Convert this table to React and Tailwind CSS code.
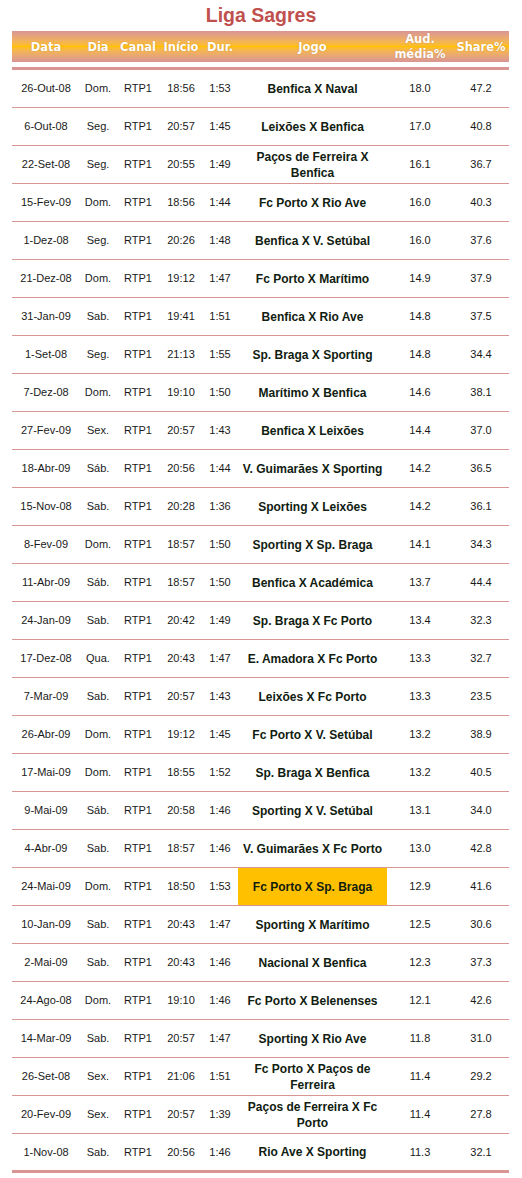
const jogos = [
  ["26-Out-08", "Dom.", "RTP1", "18:56", "1:53", "Benfica X Naval", "18.0", "47.2"],
  ["6-Out-08", "Seg.", "RTP1", "20:57", "1:45", "Leixões X Benfica", "17.0", "40.8"],
  ["22-Set-08", "Seg.", "RTP1", "20:55", "1:49", "Paços de Ferreira X Benfica", "16.1", "36.7"],
  ["15-Fev-09", "Dom.", "RTP1", "18:56", "1:44", "Fc Porto X Rio Ave", "16.0", "40.3"],
  ["1-Dez-08", "Seg.", "RTP1", "20:26", "1:48", "Benfica X V. Setúbal", "16.0", "37.6"],
  ["21-Dez-08", "Dom.", "RTP1", "19:12", "1:47", "Fc Porto X Marítimo", "14.9", "37.9"],
  ["31-Jan-09", "Sab.", "RTP1", "19:41", "1:51", "Benfica X Rio Ave", "14.8", "37.5"],
  ["1-Set-08", "Seg.", "RTP1", "21:13", "1:55", "Sp. Braga X Sporting", "14.8", "34.4"],
  ["7-Dez-08", "Dom.", "RTP1", "19:10", "1:50", "Marítimo X Benfica", "14.6", "38.1"],
  ["27-Fev-09", "Sex.", "RTP1", "20:57", "1:43", "Benfica X Leixões", "14.4", "37.0"],
  ["18-Abr-09", "Sáb.", "RTP1", "20:56", "1:44", "V. Guimarães X Sporting", "14.2", "36.5"],
  ["15-Nov-08", "Sab.", "RTP1", "20:28", "1:36", "Sporting X Leixões", "14.2", "36.1"],
  ["8-Fev-09", "Dom.", "RTP1", "18:57", "1:50", "Sporting X Sp. Braga", "14.1", "34.3"],
  ["11-Abr-09", "Sáb.", "RTP1", "18:57", "1:50", "Benfica X Académica", "13.7", "44.4"],
  ["24-Jan-09", "Sab.", "RTP1", "20:42", "1:49", "Sp. Braga X Fc Porto", "13.4", "32.3"],
  ["17-Dez-08", "Qua.", "RTP1", "20:43", "1:47", "E. Amadora X Fc Porto", "13.3", "32.7"],
  ["7-Mar-09", "Sab.", "RTP1", "20:57", "1:43", "Leixões X Fc Porto", "13.3", "23.5"],
  ["26-Abr-09", "Dom.", "RTP1", "19:12", "1:45", "Fc Porto X V. Setúbal", "13.2", "38.9"],
  ["17-Mai-09", "Dom.", "RTP1", "18:55", "1:52", "Sp. Braga X Benfica", "13.2", "40.5"],
  ["9-Mai-09", "Sáb.", "RTP1", "20:58", "1:46", "Sporting X V. Setúbal", "13.1", "34.0"],
  ["4-Abr-09", "Sab.", "RTP1", "18:57", "1:46", "V. Guimarães X Fc Porto", "13.0", "42.8"],
  ["24-Mai-09", "Dom.", "RTP1", "18:50", "1:53", "Fc Porto X Sp. Braga", "12.9", "41.6", true],
  ["10-Jan-09", "Sab.", "RTP1", "20:43", "1:47", "Sporting X Marítimo", "12.5", "30.6"],
  ["2-Mai-09", "Sab.", "RTP1", "20:43", "1:46", "Nacional X Benfica", "12.3", "37.3"],
  ["24-Ago-08", "Dom.", "RTP1", "19:10", "1:46", "Fc Porto X Belenenses", "12.1", "42.6"],
  ["14-Mar-09", "Sab.", "RTP1", "20:57", "1:47", "Sporting X Rio Ave", "11.8", "31.0"],
  ["26-Set-08", "Sex.", "RTP1", "21:06", "1:51", "Fc Porto X Paços de Ferreira", "11.4", "29.2"],
  ["20-Fev-09", "Sex.", "RTP1", "20:57", "1:39", "Paços de Ferreira X Fc Porto", "11.4", "27.8"],
  ["1-Nov-08", "Sab.", "RTP1", "20:56", "1:46", "Rio Ave X Sporting", "11.3", "32.1"],
];

const cols = "grid grid-cols-[68px_36px_44px_42px_36px_149px_66px_56px]";

const App = () => {
  return (
    <div className="w-[522px] bg-white font-['Liberation_Sans',Arial,sans-serif]">
      <div className="h-[31px] flex items-center justify-center">
        <h1 className="text-[19.5px] font-bold text-[#c0504d] leading-none">Liga Sagres</h1>
      </div>

      <div className="ml-[12px] w-[497px]">
        <div
          className={`${cols} h-[31px] items-center text-center text-white font-bold text-[11.5px] leading-[15px] font-['DejaVu_Sans',Verdana,sans-serif] bg-linear-to-b from-[#d99594] via-[#ffc000] to-[#d99594] [text-shadow:0_0_1px_rgba(150,80,60,0.6)]`}
        >
          <div className="pt-[1px]">Data</div>
          <div className="pt-[1px]">Dia</div>
          <div className="pt-[1px]">Canal</div>
          <div className="pt-[1px]">Início</div>
          <div className="pt-[1px]">Dur.</div>
          <div className="pt-[1px]">Jogo</div>
          <div>
            Aud.
            <br />
            média%
          </div>
          <div className="pt-[1px]">Share%</div>
        </div>

        <div className="mt-[5px] h-[3px] bg-[#d99594]" />

        {jogos.map((j, i) => {
          const last = i === jogos.length - 1;
          return (
            <div
              key={i}
              className={`${cols} text-center text-[11px] text-[#1a1a1a] ${
                last ? "h-[36px]" : "h-[38px] border-b border-[#d99594]"
              }`}
            >
              <div className="flex items-center justify-center">{j[0]}</div>
              <div className="flex items-center justify-center">{j[1]}</div>
              <div className="flex items-center justify-center">{j[2]}</div>
              <div className="flex items-center justify-center">{j[3]}</div>
              <div className="flex items-center justify-center">{j[4]}</div>
              <div
                className={`flex items-center justify-center px-[3px] text-[12px] font-bold leading-[16px] text-[#102010] ${
                  j[8] ? "bg-[#ffc000]" : ""
                }`}
              >
                {j[5]}
              </div>
              <div className="flex items-center justify-center">{j[6]}</div>
              <div className="flex items-center justify-center">{j[7]}</div>
            </div>
          );
        })}

        <div className="h-[3px] bg-[#d99594]" />
      </div>
    </div>
  );
};

export default App;
